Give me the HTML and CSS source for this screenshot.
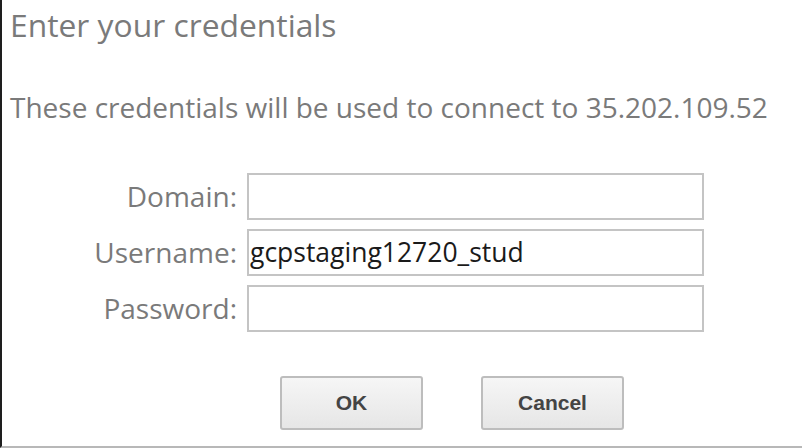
FILE: index.html
```html
<!DOCTYPE html>
<html>
<head>
<meta charset="utf-8">
<link rel="stylesheet" href="styles.css">
</head>
<body>
<div class="dialog">
  <h1 class="title">Enter your credentials</h1>
  <p class="desc">These credentials will be used to connect to 35.202.109.52</p>
  <div class="fields">
    <label class="label">Domain:</label>
    <div class="input"></div>
    <label class="label">Username:</label>
    <div class="input">gcpstaging12720_stud</div>
    <label class="label">Password:</label>
    <div class="input"></div>
  </div>
  <div class="buttons">
    <button class="btn">OK</button>
    <button class="btn">Cancel</button>
  </div>
</div>
</body>
</html>
```
FILE: styles.css
```css
html, body {
  margin: 0;
  padding: 0;
  background: #fff;
}
body {
  width: 802px;
  height: 448px;
  overflow: hidden;
}
.dialog {
  box-sizing: border-box;
  height: 448px;
  border-left: 2px solid #1e1e1e;
  border-bottom: 2px solid #b8b8b8;
  padding-left: 8px;
  font-family: "Open Sans", sans-serif;
  color: #7a7a7a;
  display: flex;
  flex-direction: column;
}
.title {
  margin: 3px 0 0 0;
  font-size: 31.8px;
  font-weight: normal;
  line-height: 44px;
}
.desc {
  margin: 41px 0 0 0;
  font-size: 28px;
  line-height: 38px;
}
.fields {
  display: grid;
  grid-template-columns: 227px 457px;
  column-gap: 10px;
  row-gap: 9px;
  margin-top: 47px;
}
.label {
  text-align: right;
  font-size: 28px;
  line-height: 47px;
}
.input {
  box-sizing: border-box;
  height: 47px;
  border: 2px solid #c4c4c4;
  font-size: 26.5px;
  line-height: 43px;
  color: #1a1a1a;
  padding-left: 1px;
}
.buttons {
  display: flex;
  gap: 58px;
  margin-top: 44px;
  padding-left: 270px;
}
.btn {
  width: 143px;
  height: 54px;
  box-sizing: border-box;
  border: 2px solid #bdbdbd;
  border-radius: 3px;
  background: linear-gradient(#f6f6f6, #e6e6e6);
  font-family: "Liberation Sans", Arial, sans-serif;
  font-weight: bold;
  font-size: 21px;
  color: #444;
  padding: 0;
}
```
